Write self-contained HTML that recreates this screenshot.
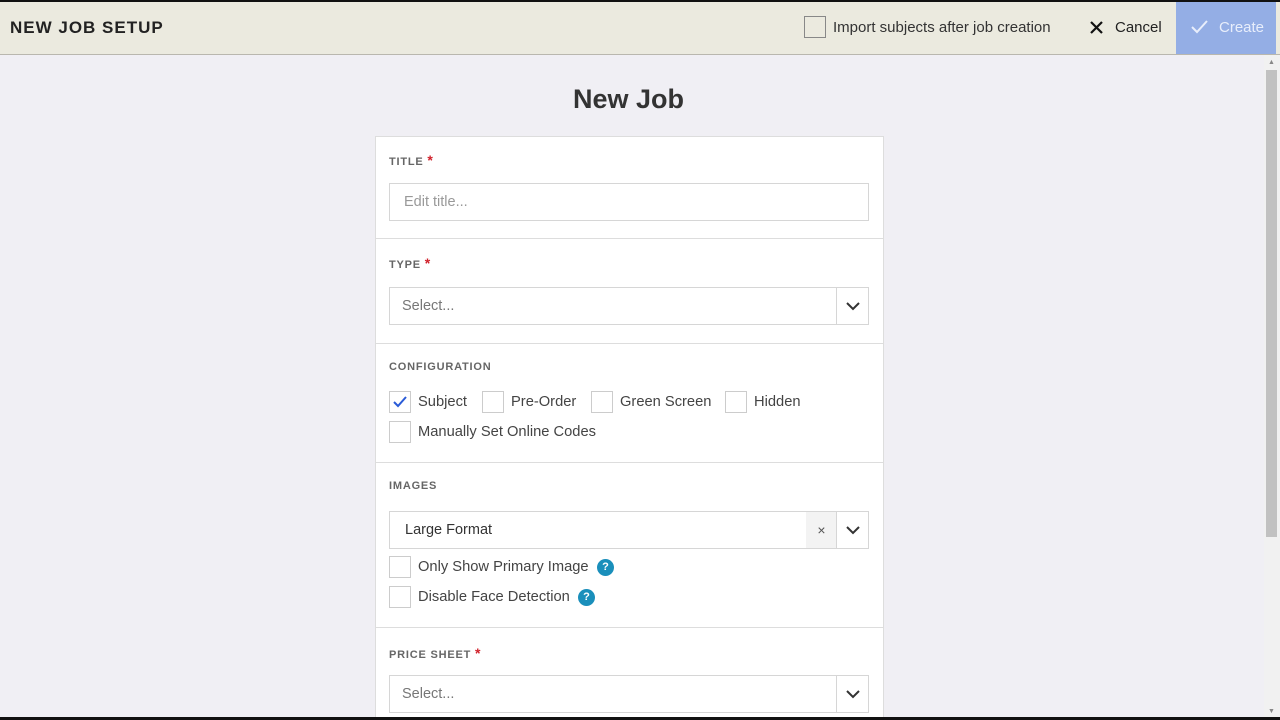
<!DOCTYPE html>
<html><head><style>
*{box-sizing:border-box;margin:0;padding:0}
html,body{width:1280px;height:720px;overflow:hidden}
body{background:#f0eff4;font-family:"Liberation Sans",sans-serif;position:relative;color:#333}
.a{position:absolute}
.hdr{left:0;top:0;width:1280px;height:55px;background:#ebeadf;border-top:2px solid #111;border-bottom:1px solid #b9b7ae}
.card{left:375px;top:136px;width:509px;height:584px;background:#fff;border:1px solid #ddd;border-bottom:none}
.lbl{font-size:11px;font-weight:bold;letter-spacing:.8px;color:#666}
.star{color:#d0202a;font-size:14px}
.inp{border:1px solid #d6d6d6;background:#fff;height:38px;font-size:14.5px;color:#999;padding-left:14px;line-height:36px}
.sep{left:375px;width:509px;height:1px;background:#ddd}
.cb{width:22px;height:22px;border:1px solid #ccc;background:#fff}
.t{font-size:14.7px;color:#444}
.h{font-size:15px}
.chev{width:32px;height:36px;border-left:1px solid #d6d6d6;display:flex;align-items:center;justify-content:center}
.q{width:17px;height:17px;border-radius:50%;background:#1a8fbb;color:#fff;font-size:11px;font-weight:bold;text-align:center;line-height:17px}
</style></head><body>
<div class="a hdr"></div>
<div class="a" style="left:10px;top:18px;font-size:17px;font-weight:bold;letter-spacing:1px;color:#222">NEW JOB SETUP</div>
<div class="a cb" style="left:804px;top:16px;border-color:#888;background:transparent"></div>
<div class="a t h" style="left:833px;top:19px;color:#333">Import subjects after job creation</div>
<svg class="a" style="left:1090px;top:21px" width="13" height="13"><path d="M1 1L12 12M12 1L1 12" stroke="#111" stroke-width="2.2"/></svg>
<div class="a t h" style="left:1115px;top:19px;color:#222">Cancel</div>
<div class="a" style="left:1176px;top:2px;width:100px;height:52px;background:#94aee5"></div>
<svg class="a" style="left:1191px;top:20px" width="17" height="14"><path d="M1 7L6 12L16 1" stroke="#e8eefb" stroke-width="2" fill="none"/></svg>
<div class="a t h" style="left:1219px;top:19px;color:#e8eefb">Create</div>
<div class="a" style="left:1264px;top:55px;width:16px;height:665px;background:#f1f1f1"></div>
<div class="a" style="left:1266px;top:70px;width:11px;height:467px;background:#c1c1c1"></div>
<div class="a" style="left:1268px;top:59px;font-size:7px;color:#888">▲</div>
<div class="a" style="left:1268px;top:708px;font-size:7px;color:#888">▼</div>
<div class="a" style="left:0;top:84px;width:1257px;text-align:center;font-size:27px;font-weight:bold;color:#333">New Job</div>
<div class="a card"></div>
<div class="a lbl" style="left:389px;top:152px">TITLE <span class="star">*</span></div>
<div class="a inp" style="left:389px;top:183px;width:480px">Edit title...</div>
<div class="a sep" style="top:238px"></div>
<div class="a lbl" style="left:389px;top:255px">TYPE <span class="star">*</span></div>
<div class="a inp" style="left:389px;top:287px;width:480px;padding-left:12px;color:#777">Select...</div>
<div class="a chev" style="left:836px;top:288px"><svg width="14" height="9"><path d="M1 1L7 7L13 1" stroke="#333" stroke-width="2" fill="none"/></svg></div>
<div class="a sep" style="top:343px"></div>
<div class="a lbl" style="left:389px;top:361px">CONFIGURATION</div>
<div class="a cb" style="left:389px;top:391px"></div>
<svg class="a" style="left:393px;top:396px" width="14" height="12"><path d="M1 6L5 10L13 1" stroke="#2a5bd7" stroke-width="2" fill="none"/></svg>
<div class="a t" style="left:418px;top:394px">Subject</div>
<div class="a cb" style="left:482px;top:391px"></div>
<div class="a t" style="left:511px;top:394px">Pre-Order</div>
<div class="a cb" style="left:591px;top:391px"></div>
<div class="a t" style="left:620px;top:394px">Green Screen</div>
<div class="a cb" style="left:725px;top:391px"></div>
<div class="a t" style="left:754px;top:394px">Hidden</div>
<div class="a cb" style="left:389px;top:421px"></div>
<div class="a t" style="left:418px;top:424px">Manually Set Online Codes</div>
<div class="a sep" style="top:462px"></div>
<div class="a lbl" style="left:389px;top:480px">IMAGES</div>
<div class="a inp" style="left:389px;top:511px;width:480px;color:#333;padding-left:15px">Large Format</div>
<div class="a" style="left:806px;top:512px;width:31px;height:36px;background:#f3f3f3;text-align:center;line-height:36px;font-size:14px;color:#555">×</div>
<div class="a chev" style="left:836px;top:512px"><svg width="14" height="9"><path d="M1 1L7 7L13 1" stroke="#333" stroke-width="2" fill="none"/></svg></div>
<div class="a cb" style="left:389px;top:556px"></div>
<div class="a t" style="left:418px;top:559px">Only Show Primary Image</div>
<div class="a q" style="left:597px;top:559px">?</div>
<div class="a cb" style="left:389px;top:586px"></div>
<div class="a t" style="left:418px;top:589px">Disable Face Detection</div>
<div class="a q" style="left:578px;top:589px">?</div>
<div class="a sep" style="top:627px"></div>
<div class="a lbl" style="left:389px;top:645px">PRICE SHEET <span class="star">*</span></div>
<div class="a inp" style="left:389px;top:675px;width:480px;padding-left:12px;color:#777">Select...</div>
<div class="a chev" style="left:836px;top:676px"><svg width="14" height="9"><path d="M1 1L7 7L13 1" stroke="#333" stroke-width="2" fill="none"/></svg></div>
<div class="a" style="left:0;top:717px;width:1280px;height:3px;background:#111"></div>
</body></html>
